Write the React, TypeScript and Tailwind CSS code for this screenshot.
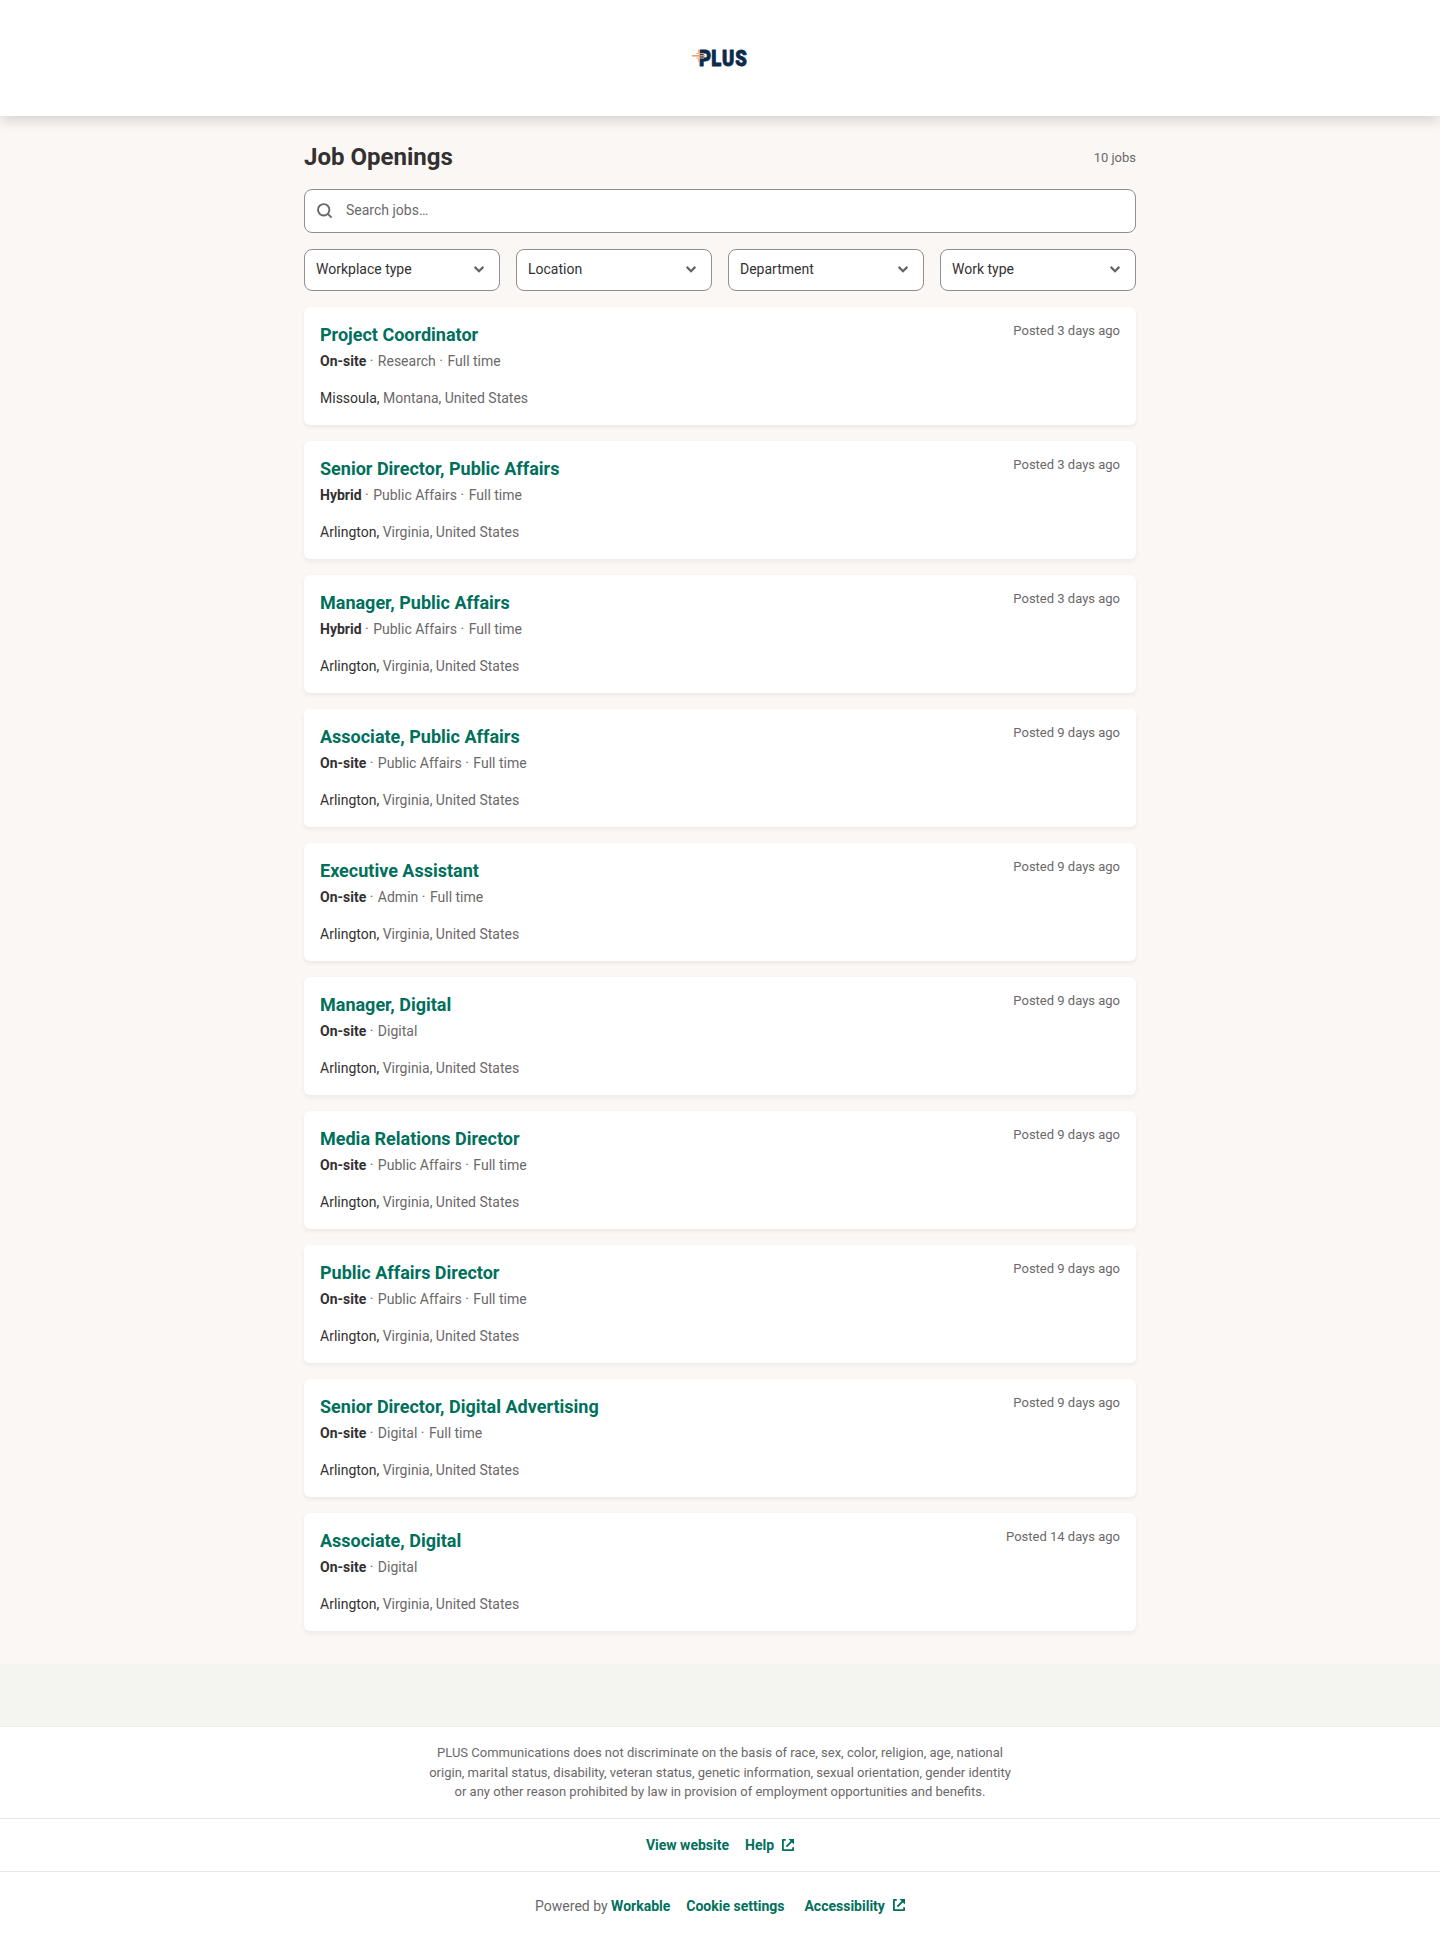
import { useState } from "react";

type Job = {
  title: string;
  workplace: string;
  details: string[];
  city: string;
  region: string;
  posted: string;
};

const FILTERS = ["Workplace type", "Location", "Department", "Work type"];

const VA = { city: "Arlington,", region: "Virginia, United States" };

const JOBS: Job[] = [
  { title: "Project Coordinator", workplace: "On-site", details: ["Research", "Full time"], city: "Missoula,", region: "Montana, United States", posted: "Posted 3 days ago" },
  { title: "Senior Director, Public Affairs", workplace: "Hybrid", details: ["Public Affairs", "Full time"], ...VA, posted: "Posted 3 days ago" },
  { title: "Manager, Public Affairs", workplace: "Hybrid", details: ["Public Affairs", "Full time"], ...VA, posted: "Posted 3 days ago" },
  { title: "Associate, Public Affairs", workplace: "On-site", details: ["Public Affairs", "Full time"], ...VA, posted: "Posted 9 days ago" },
  { title: "Executive Assistant", workplace: "On-site", details: ["Admin", "Full time"], ...VA, posted: "Posted 9 days ago" },
  { title: "Manager, Digital", workplace: "On-site", details: ["Digital"], ...VA, posted: "Posted 9 days ago" },
  { title: "Media Relations Director", workplace: "On-site", details: ["Public Affairs", "Full time"], ...VA, posted: "Posted 9 days ago" },
  { title: "Public Affairs Director", workplace: "On-site", details: ["Public Affairs", "Full time"], ...VA, posted: "Posted 9 days ago" },
  { title: "Senior Director, Digital Advertising", workplace: "On-site", details: ["Digital", "Full time"], ...VA, posted: "Posted 9 days ago" },
  { title: "Associate, Digital", workplace: "On-site", details: ["Digital"], ...VA, posted: "Posted 14 days ago" },
];

// ─── Icons ───────────────────────────────────────────────────────

function Logo() {
  return (
    <svg width="80" height="36" viewBox="-8 0 80 36" role="img" aria-label="PLUS">
      <text
        x="13 27.6 40.4 56.2"
        y="26.4"
        transform="scale(0.84 1)"
        fontFamily="Roboto, sans-serif"
        fontSize="22"
        fontWeight="900"
        fill="#0b2b4c"
        stroke="#0b2b4c"
        strokeWidth="0.9"
        strokeLinejoin="round"
      >
        PLUS
      </text>
      {/* dotted plus that overlaps the stem of the P */}
      <path d="M10.5 9.5v4M10.5 18v4" stroke="#eab893" strokeWidth="1.3" />
      <path d="M4 15.8h13" stroke="#e79a6b" strokeWidth="1.5" />
      <path d="M8 13.6h8M8 18h8" stroke="#eab893" strokeWidth="1" />
    </svg>
  );
}

function SearchIcon() {
  return (
    <svg width="16" height="16" viewBox="0 0 16 16" fill="none" stroke="#6a6769" strokeWidth="1.9">
      <circle cx="6.7" cy="6.8" r="5.7" />
      <path d="M10.8 10.9L14.6 14.7" />
    </svg>
  );
}

function Chevron() {
  return (
    <svg width="10" height="7" viewBox="0 0 10 7" fill="none" stroke="#656264" strokeWidth="2.2">
      <path d="M0.7 0.9L5 5.2L9.3 0.9" />
    </svg>
  );
}

function ExternalIcon() {
  return (
    <svg width="12" height="12" viewBox="0 0 12 12" fill="none" stroke="#00705c" strokeWidth="1.8" strokeLinejoin="round">
      <path d="M3.8 0.9H0.9V11.1H11.1V8.2" />
      <path d="M10.4 1.6L4.4 7.6" />
      <path d="M6.4 0H12V5.6Z" fill="#00705c" stroke="none" />
    </svg>
  );
}

// ─── Job card ────────────────────────────────────────────────────

function JobCard({ job }: { job: Job }) {
  return (
    <li className="flex h-[118px] justify-between rounded-md bg-white p-4 shadow-[0_2px_4px_rgba(51,48,50,0.07)]">
      <div>
        <h3 className="text-lg leading-6 font-bold text-[#00705c]">{job.title}</h3>
        <p className="mt-1 text-sm leading-5 text-[#6b686a]">
          <strong className="font-bold text-[#333032]">{job.workplace}</strong>
          {job.details.map((d) => (
            <span key={d}>
              <span className="mr-px"> ·</span> {d}
            </span>
          ))}
        </p>
        <p className="mt-[17px] text-sm leading-5 text-[#6b686a]">
          <span className="text-[#333032]">{job.city}</span> {job.region}
        </p>
      </div>
      <span className="text-[13px] leading-[15px] text-[#6b686a]">{job.posted}</span>
    </li>
  );
}

export default function App() {
  const [query, setQuery] = useState("");

  return (
    <div className="min-h-[1941px] bg-[#f4f5f0] font-['Roboto',sans-serif] text-[#333032]">
      <header className="relative flex h-[116px] items-center justify-center bg-white shadow-[0_2px_14px_rgba(51,48,50,0.24)]">
        <Logo />
      </header>

      <main className="h-[1548px] bg-[#fbf7f4] pt-6">
        <div className="mx-auto w-[832px]">
          <div className="flex h-[33px] items-center justify-between">
            <h2 className="text-2xl font-bold">Job Openings</h2>
            <span className="pt-0.5 text-[13px] text-[#6b686a]">10 jobs</span>
          </div>

          <label className="mt-4 flex h-11 items-center rounded-lg border border-[#918e90] bg-white pb-px pl-3">
            <SearchIcon />
            <input
              value={query}
              onChange={(e) => setQuery(e.target.value)}
              placeholder="Search jobs…"
              className="ml-[13px] flex-1 pb-px text-sm outline-none placeholder:text-[#6b686a]"
            />
          </label>

          <div className="mt-4 grid grid-cols-4 gap-4">
            {FILTERS.map((f) => (
              <button
                key={f}
                className="flex h-[42px] items-center justify-between rounded-lg border border-[#918e90] bg-white pr-[15px] pb-px pl-[11px] text-sm"
              >
                <span className="pb-px">{f}</span>
                <Chevron />
              </button>
            ))}
          </div>

          <ul className="mt-4 flex flex-col gap-4">
            {JOBS.map((job) => (
              <JobCard key={job.title} job={job} />
            ))}
          </ul>
        </div>
      </main>

      <footer className="mt-[62px] bg-white text-sm">
        <div className="h-[92px] border-t border-[#eceee8] pt-4">
          <p className="mx-auto w-[600px] text-center text-[13px] leading-[19.5px] text-[#6b686a]">
            PLUS Communications does not discriminate on the basis of race, sex, color, religion, age, national
            <br />
            origin, marital status, disability, veteran status, genetic information, sexual orientation, gender identity
            <br />
            or any other reason prohibited by law in provision of employment opportunities and benefits.
          </p>
        </div>
        <div className="flex h-[53px] items-center justify-center gap-4 border-t border-[#e8e8e8] font-bold text-[#00705c]">
          <a>View website</a>
          <a className="flex items-center gap-2">
            Help <ExternalIcon />
          </a>
        </div>
        <div className="flex h-[70px] items-center justify-center border-t border-[#e8e8e8] pb-0.5 font-bold text-[#00705c]">
          <span>
            <span className="font-normal text-[#6b686a]">Powered by</span> Workable
          </span>
          <a className="ml-4">Cookie settings</a>
          <a className="ml-5 flex items-center gap-2">
            Accessibility
            <span className="pb-0.5">
              <ExternalIcon />
            </span>
          </a>
        </div>
      </footer>
    </div>
  );
}
